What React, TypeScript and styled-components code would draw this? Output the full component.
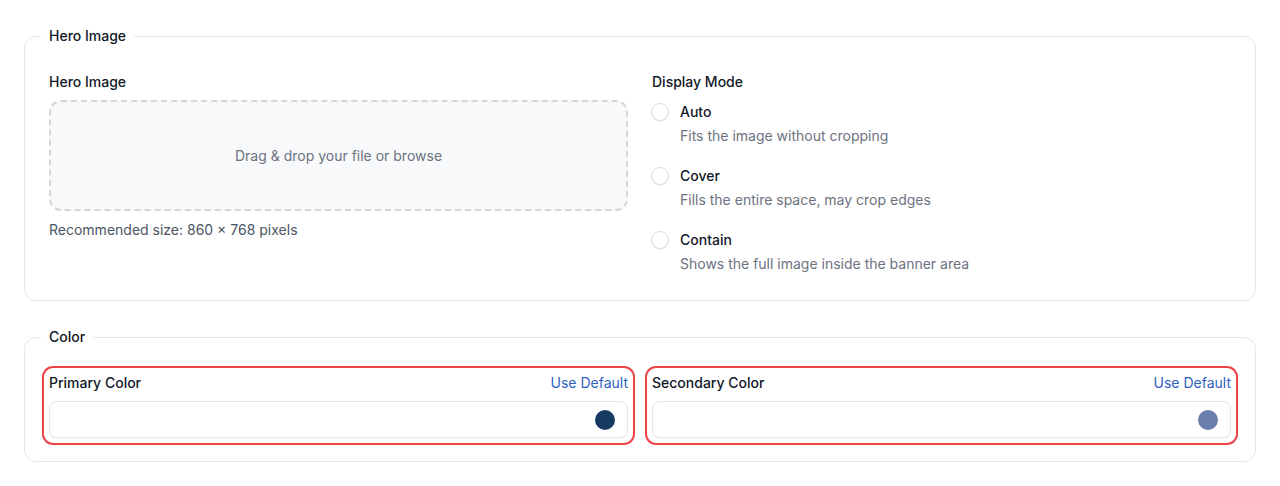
import React from 'react'
import styled, { createGlobalStyle } from 'styled-components'

const GlobalStyle = createGlobalStyle`
  html, body {
    margin: 0;
    padding: 0;
    background: #ffffff;
    font-family: Inter, "Noto Sans", sans-serif;
    color: #111827;
    -webkit-font-smoothing: antialiased;
  }
  * { box-sizing: border-box; }
`

interface Mode {
  key: string
  title: string
  hint: string
}

const modes: Mode[] = [
  { key: 'auto', title: 'Auto', hint: 'Fits the image without cropping' },
  { key: 'cover', title: 'Cover', hint: 'Fills the entire space, may crop edges' },
  { key: 'contain', title: 'Contain', hint: 'Shows the full image inside the banner area' }
]

const colorFields = [
  { key: 'primary', label: 'Primary Color', swatch: '#173a63' },
  { key: 'secondary', label: 'Secondary Color', swatch: '#6a7eab' }
]

export default function App() {
  return (
    <>
      <GlobalStyle />
      <S.Page>
        <S.Section $bottom={26}>
          <S.Legend>Hero Image</S.Legend>
          <S.TwoCols>
            <S.Column>
              <S.Label>Hero Image</S.Label>
              <S.DropZone>Drag &amp; drop your file or browse</S.DropZone>
              <S.Help>Recommended size: 860 × 768 pixels</S.Help>
            </S.Column>
            <S.Column>
              <S.Label>Display Mode</S.Label>
              <S.RadioList>
                {modes.map(m => (
                  <S.RadioRow key={m.key}>
                    <S.RadioDot />
                    <S.RadioText>
                      <S.RadioTitle>{m.title}</S.RadioTitle>
                      <S.RadioHint>{m.hint}</S.RadioHint>
                    </S.RadioText>
                  </S.RadioRow>
                ))}
              </S.RadioList>
            </S.Column>
          </S.TwoCols>
        </S.Section>

        <S.Section $bottom={23}>
          <S.Legend>Color</S.Legend>
          <S.TwoCols>
            {colorFields.map(f => (
              <S.ColorField key={f.key}>
                <S.FieldHead>
                  <S.Label>{f.label}</S.Label>
                  <S.LinkButton>Use Default</S.LinkButton>
                </S.FieldHead>
                <S.ColorInput>
                  <S.Swatch $color={f.swatch} />
                </S.ColorInput>
              </S.ColorField>
            ))}
          </S.TwoCols>
        </S.Section>
      </S.Page>
    </>
  )
}

const S = {
  Page: styled.div`
    padding: 26px 24px 24px;
    display: flex;
    flex-direction: column;
    gap: 26px;
  `,
  Section: styled.fieldset<{ $bottom: number }>`
    margin: 0;
    border: 1px solid #e5e7eb;
    border-radius: 12px;
    padding: 0 24px ${p => p.$bottom}px;
    min-width: 0;
  `,
  Legend: styled.legend`
    padding: 0 8px;
    margin-left: -8px;
    font-size: 14px;
    line-height: 20px;
    font-weight: 500;
    color: #111827;
  `,
  TwoCols: styled.div`
    display: grid;
    grid-template-columns: 1fr 1fr;
    gap: 24px;
    margin-top: 26px;
  `,
  Column: styled.div`
    display: flex;
    flex-direction: column;
  `,
  Label: styled.div`
    font-size: 14px;
    line-height: 20px;
    font-weight: 500;
    color: #111827;
  `,
  DropZone: styled.div`
    margin-top: 8px;
    height: 111px;
    padding-bottom: 1px;
    border: 2px dashed #d4d6dc;
    border-radius: 12px;
    background: #f8f9fb;
    display: flex;
    align-items: center;
    justify-content: center;
    font-size: 14px;
    color: #6b7280;
  `,
  Help: styled.div`
    margin-top: 9px;
    font-size: 14px;
    line-height: 20px;
    color: #4b5563;
  `,
  RadioList: styled.div`
    margin-top: 10px;
    display: flex;
    flex-direction: column;
    gap: 20px;
  `,
  RadioRow: styled.div`
    display: flex;
    align-items: flex-start;
    gap: 11px;
  `,
  RadioDot: styled.span`
    flex: none;
    width: 18px;
    height: 18px;
    margin-top: 1px;
    margin-left: -1px;
    border-radius: 50%;
    border: 1px solid #dcdee3;
    background: #fff;
    box-shadow: 0 1px 1px rgba(0, 0, 0, 0.06);
  `,
  RadioText: styled.div`
    display: flex;
    flex-direction: column;
    gap: 4px;
  `,
  RadioTitle: styled.div`
    font-size: 14px;
    line-height: 20px;
    font-weight: 500;
    color: #111827;
  `,
  RadioHint: styled.div`
    font-size: 14px;
    line-height: 20px;
    color: #6b7280;
  `,
  ColorField: styled.div`
    display: flex;
    flex-direction: column;
    gap: 8px;
    outline: 2px solid #ef4444;
    outline-offset: 5px;
    border-radius: 4px;
  `,
  FieldHead: styled.div`
    display: flex;
    justify-content: space-between;
    align-items: center;
  `,
  LinkButton: styled.button`
    border: 0;
    padding: 0;
    background: none;
    font-family: inherit;
    font-size: 14px;
    line-height: 20px;
    color: #2f62c2;
    cursor: pointer;
  `,
  ColorInput: styled.div`
    height: 37px;
    border: 1px solid #e5e7eb;
    border-radius: 8px;
    background: #fff;
    box-shadow: 0 1px 2px rgba(0, 0, 0, 0.05);
    display: flex;
    align-items: center;
    justify-content: flex-end;
    padding: 0 12px;
  `,
  Swatch: styled.span<{ $color: string }>`
    width: 20px;
    height: 20px;
    border-radius: 50%;
    background: ${p => p.$color};
  `
}
